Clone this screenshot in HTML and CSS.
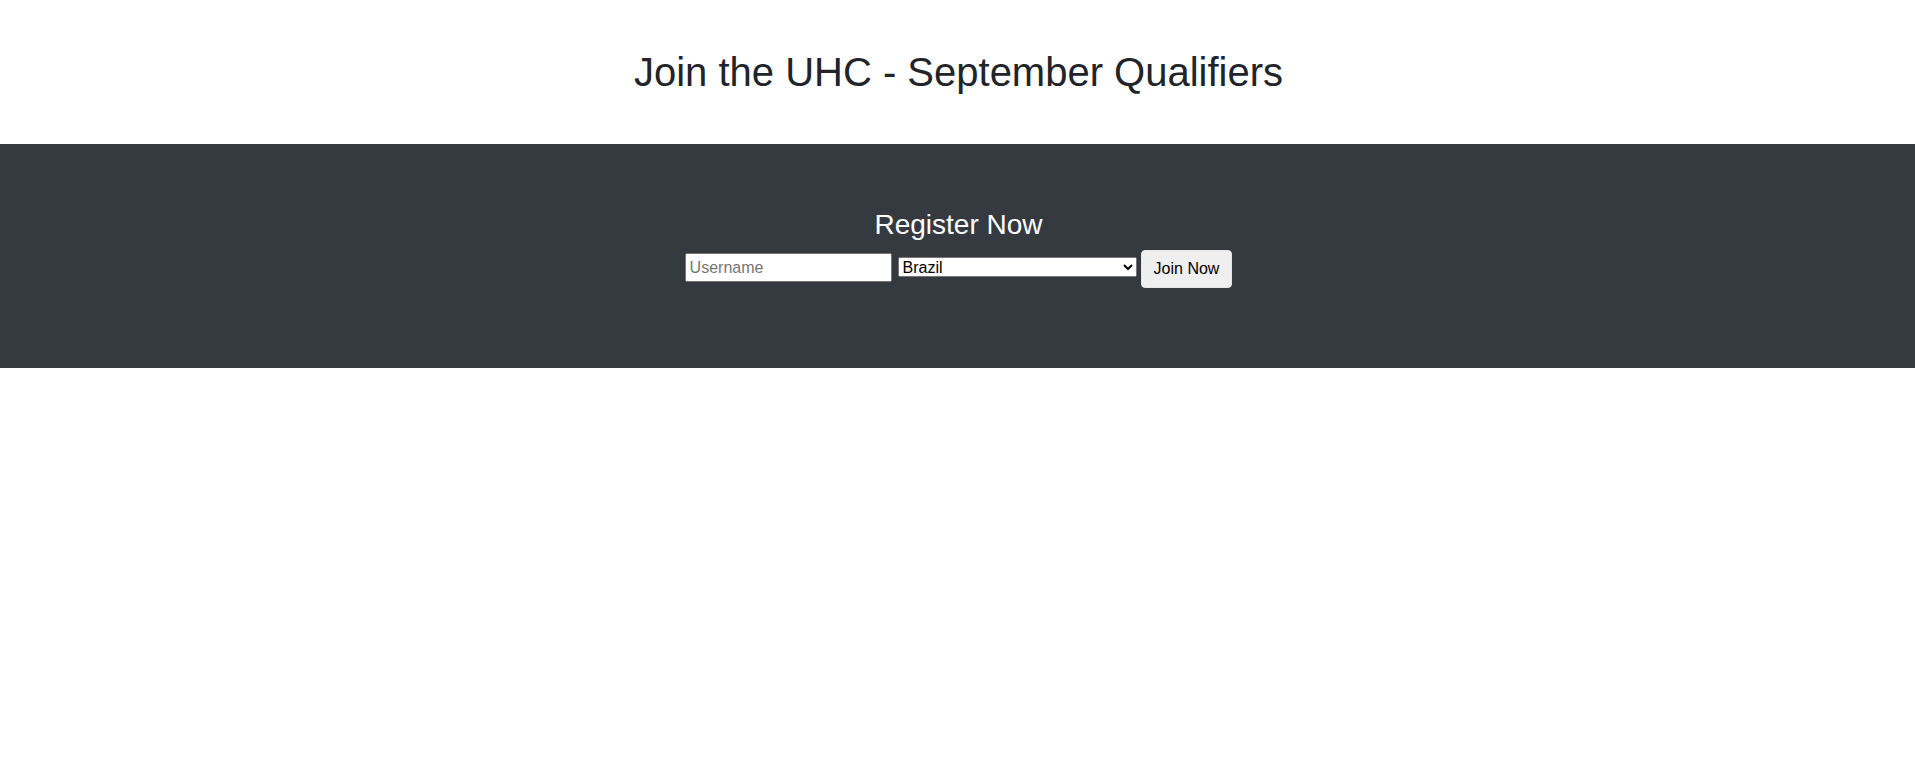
FILE: index.html
```html
<!DOCTYPE html>
<html lang="en">
<head>
<meta charset="utf-8">
<title>Join the UHC - September Qualifiers</title>
<link rel="stylesheet" href="styles.css">
</head>
<body>
  <header class="page-header">
    <h1 class="title">Join the UHC - September Qualifiers</h1>
  </header>
  <section class="register">
    <h3 class="register-title">Register Now</h3>
    <form class="register-form">
      <input class="username" type="text" placeholder="Username">
      <select class="country">
        <option>Brazil</option>
        <option>Argentina</option>
        <option>United States</option>
      </select>
      <button class="join" type="button">Join Now</button>
    </form>
  </section>
</body>
</html>
```
FILE: styles.css
```css
html, body {
  margin: 0;
  padding: 0;
  background: #fff;
}
body {
  font-family: "Liberation Sans", Arial, Helvetica, sans-serif;
  font-size: 16px;
  line-height: 1.5;
  color: #212529;
}
.page-header {
  padding: 48px 0 40px 2px;
  text-align: center;
}
.title {
  margin: 0 0 8px;
  font-size: 40px;
  font-weight: 400;
  line-height: 1.2;
  color: #212529;
}
.register {
  background: #343a40;
  padding: 64px 0 80px 2px;
  text-align: center;
}
.register-title {
  margin: 0 0 8px;
  font-size: 28px;
  font-weight: 400;
  line-height: 1.2;
  color: #fff;
}
.register-form {
  display: flex;
  justify-content: center;
  align-items: center;
  margin: 0;
}
.register-form input,
.register-form select,
.register-form button {
  font-family: inherit;
  font-size: 16px;
  box-sizing: border-box;
  margin: 0;
}
.username {
  width: 207px;
  height: 29px;
  line-height: 1.5;
  padding: 1px 3px;
  margin-right: 6px !important;
  transform: translateY(-1px);
}
.country {
  width: 239px;
  height: 20px;
  margin-right: 4px !important;
  transform: translateY(-2px);
}
.join {
  height: 38px;
  padding: 6px 12px;
  line-height: 1.5;
  background: #efefef;
  color: #000;
  border: 1px solid #e6e6e6;
  border-radius: 4px;
}
```
